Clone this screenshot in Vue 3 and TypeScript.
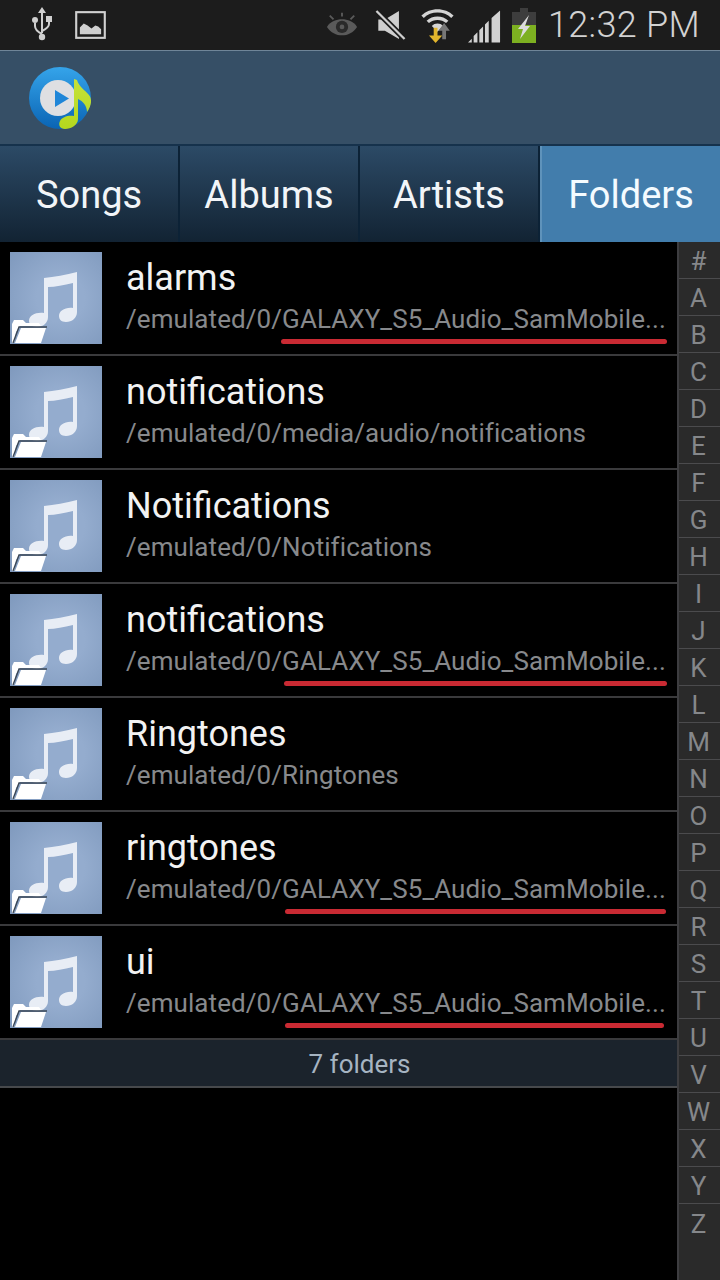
<script setup lang="ts">
const tabs = ['Songs', 'Albums', 'Artists', 'Folders']
const G = 'GALAXY_S5_Audio_SamMobile...'
const rows = [
  { t: 'alarms', p: '/emulated/0/' + G, mark: { left: 281, width: 386 } },
  { t: 'notifications', p: '/emulated/0/media/audio/notifications' },
  { t: 'Notifications', p: '/emulated/0/Notifications' },
  { t: 'notifications', p: '/emulated/0/' + G, mark: { left: 284, width: 383 } },
  { t: 'Ringtones', p: '/emulated/0/Ringtones' },
  { t: 'ringtones', p: '/emulated/0/' + G, mark: { left: 285, width: 381 } },
  { t: 'ui', p: '/emulated/0/' + G, mark: { left: 285, width: 379 } },
]
const letters = '#ABCDEFGHIJKLMNOPQRSTUVWXYZ'.split('')
</script>

<template>
  <div class="screen">
    <div class="status">
      <div class="st-left">
        <svg class="usb" width="24" height="36" viewBox="0 0 24 36">
          <path d="M12 0l4 6h-3v20h-2V6H8z" fill="#cfcfcf" />
          <path d="M12 27c-4-2-7-5-7-8v-3M12 24c4-2 7-4 7-7v-3" fill="none" stroke="#cfcfcf" stroke-width="2" />
          <circle cx="5" cy="13" r="3" fill="#cfcfcf" />
          <rect x="16" y="9" width="6" height="6" fill="#cfcfcf" />
          <circle cx="12" cy="30" r="3.2" fill="#cfcfcf" />
        </svg>
        <svg width="31" height="28" viewBox="0 0 32 29">
          <rect x="1.2" y="1.2" width="29.6" height="26.6" fill="none" stroke="#d0d0d0" stroke-width="2.200" />
          <path d="M5 24v-7l4-4 4 2 4 3 4-3 3 1 3 3v5z" fill="#d0d0d0" />
        </svg>
      </div>
      <div class="st-right">
        <svg class="eye" width="32" height="26" viewBox="0 0 34 26">
          <path d="M1 15c4-6 10-8 16-8s12 2 16 8c-4 6-10 9-16 9S5 21 1 15z" fill="#5a5a5a" />
          <circle cx="17" cy="15" r="6.5" fill="#2a2a2a" />
          <circle cx="17" cy="15" r="2.5" fill="#5a5a5a" />
          <path d="M17 0v4M4 3l4 4M30 3l-4 4" stroke="#5a5a5a" stroke-width="2" />
        </svg>
        <svg class="mute" width="31" height="30" viewBox="0 0 32 32">
          <path d="M3 10h7L25 1v30L10 22H3z" fill="#cfcfcf" />
          <path d="M1 1l30 30" stroke="#1c1c1c" stroke-width="6" />
          <path d="M1 1l30 30" stroke="#cfcfcf" stroke-width="2.400" />
        </svg>
        <svg class="wifi" width="35" height="36" viewBox="0 0 36 38">
          <path d="M1 9C10 0 26 0 35 9l-2.500 2.500C25 4 11 4 3.500 11.500zM6.500 14.500c6-6 17-6 23 0L27 17c-5-4.500-13-4.500-18 0zM12 20c3-3.500 9-3.500 12 0l-6 6z" fill="#d4d4d4" />
          <path d="M14 22h4v8h5l-7 8-7-8h5z" fill="#e2b52c" />
          <path d="M25 17l6 8h-4v9h-4v-9h-4z" fill="#777" />
        </svg>
        <svg class="sig" width="33" height="33" viewBox="0 0 35 34">
          <path d="M0 34l4-4v4zM6 34v-7l4-4v11zM12 34V21l4-4v17zM18 34V15l4-4v23zM25 34V8l9-8v34z" fill="#d2d2d2" />
        </svg>
        <svg class="bat" width="24" height="35" viewBox="0 0 24 35">
          <rect x="8" y="0" width="8" height="4" fill="#3d3d3d" />
          <rect x="0" y="4" width="24" height="31" fill="#3d3d3d" />
          <rect x="0" y="17" width="24" height="18" fill="#7db021" />
          <path d="M17 7L6 21h5l-3 10 10-13h-5z" fill="#dcdcdc" />
        </svg>
        <span class="clock">12:32 PM</span>
      </div>
    </div>

    <header class="bar">
      <svg width="64" height="64" viewBox="0 0 64 64">
        <defs>
          <linearGradient id="ring" x1="0" y1="0" x2="0" y2="1">
            <stop offset="0" stop-color="#35a4ea" />
            <stop offset="1" stop-color="#0a64b4" />
          </linearGradient>
          <linearGradient id="noteFill" x1="0" y1="0" x2="0" y2="1">
            <stop offset="0" stop-color="#c6e23a" />
            <stop offset="1" stop-color="#b4d81e" />
          </linearGradient>
        </defs>
        <circle cx="31" cy="31" r="31" fill="url(#ring)" />
        <circle cx="29" cy="31" r="18" fill="#dedfe2" />
        <path d="M26 23l14 8.500-14 8.500z" fill="#1f86d8" />
        <path d="M45 12l3 1c2 7 8 10 12 15 3 4 3 10-2 17 0-6-4-11-9-13v20c0 6-7 10-13 10-5 0-7-4-5-8 2-4 8-6 14-5z" fill="url(#noteFill)" />
      </svg>
    </header>

    <nav class="tabs">
      <div v-for="(tab, i) in tabs" :key="tab" class="tab" :class="{ active: i === 3 }">{{ tab }}</div>
    </nav>

    <div class="content">
      <ul class="list">
        <li v-for="(r, i) in rows" :key="i" class="row">
          <div class="thumb">
            <svg class="note" width="92" height="92" viewBox="0 0 92 92">
              <path d="M34 26c10-1 22-3 33-6v40c0 6-5 10-11 10-5 0-7-3-7-6 0-5 6-9 14-8V31c-9 2-18 4-25 4v30c0 6-5 10-11 10-5 0-8-3-8-6 0-6 7-9 15-8z" fill="#e8edf5" />
            </svg>
            <svg class="folder" width="36" height="26" viewBox="0 0 36 26">
              <path d="M0 25V6l2-4h9l3 3h13l2 3H8L4 14 2 25z" fill="#fff" />
              <path d="M3 25l6-15h25l-5 15z" fill="#fff" />
              <path d="M1 25l6-16h28" fill="none" stroke="#3b4756" stroke-width="1.400" />
            </svg>
          </div>
          <div class="info">
            <div class="title">{{ r.t }}</div>
            <div class="path">{{ r.p }}</div>
          </div>
          <span
            v-if="r.mark"
            class="mark"
            :style="{ left: r.mark.left + 'px', width: r.mark.width + 'px' }"
          ></span>
        </li>
        <li class="foot">7 folders</li>
      </ul>
      <aside class="index">
        <div v-for="l in letters" :key="l" class="letter">{{ l }}</div>
      </aside>
    </div>
  </div>
</template>

<style scoped>
.screen {
  width: 720px;
  height: 1280px;
  display: flex;
  flex-direction: column;
  background: #000;
  font-family: Roboto, "Liberation Sans", sans-serif;
  overflow: hidden;
}
.status {
  height: 50px;
  flex: none;
  background: #1c1c1c;
  display: flex;
  align-items: center;
  justify-content: space-between;
  padding: 0 20px 0 30px;
  box-sizing: border-box;
}
.st-left {
  display: flex;
  align-items: center;
  gap: 21px;
}
.st-right {
  display: flex;
  align-items: center;
}
.eye { margin-right: 17px; }
.mute { margin-right: 14px; }
.wifi { margin-right: 13px; }
.sig { margin-right: 11px; margin-top: 3px; }
.bat { margin-right: 12px; margin-top: 1px; }
.clock {
  color: #d2d2d2;
  font-size: 36px;
  line-height: 50px;
  font-weight: 300;
  letter-spacing: 0.3px;
  margin-top: -1px;
}
.bar {
  height: 96px;
  flex: none;
  box-sizing: border-box;
  background: #364f66;
  border-top: 1px solid #6f8598;
  border-bottom: 2px solid #16324c;
  padding: 16px 0 0 29px;
  display: flex;
  align-items: flex-start;
}
.tabs {
  height: 96px;
  flex: none;
  display: grid;
  grid-template-columns: repeat(4, 1fr);
}
.tab {
  display: flex;
  align-items: center;
  justify-content: center;
  color: #f2f5f8;
  font-size: 38px;
  padding-top: 1px;
  background: linear-gradient(#2c4a66, #122333);
  border-right: 2px solid #0c2236;
  box-sizing: border-box;
}
.tab.active {
  background: #427dac;
  border-right: 0;
  border-left: 2px solid #5f93bb;
  color: #f4fbff;
}
.content {
  flex: 1;
  display: flex;
  min-height: 0;
}
.list {
  flex: 1;
  min-width: 0;
  list-style: none;
  margin: 0;
  padding: 0;
}
.row {
  position: relative;
  height: 114px;
  box-sizing: border-box;
  display: flex;
  align-items: flex-start;
  padding: 10px 0 0 10px;
  border-bottom: 2px solid #3a3a3c;
}
.thumb {
  position: relative;
  width: 92px;
  height: 92px;
  flex: none;
  background: radial-gradient(circle at 55% 50%, #94acce 35%, #7f99bd 100%);
}
.note {
  position: absolute;
  left: 0;
  top: 0;
}
.folder {
  position: absolute;
  left: 2px;
  bottom: 0;
}
.info {
  margin-left: 24px;
  min-width: 0;
  flex: 1;
}
.title {
  color: #f2f2f2;
  font-size: 36px;
  line-height: 40px;
  margin-top: 6px;
}
.path {
  color: #87898c;
  font-size: 26px;
  letter-spacing: 0.08px;
  line-height: 34px;
  margin-top: 4px;
  white-space: nowrap;
}
.mark {
  position: absolute;
  top: 97px;
  height: 5px;
  background: #c92a33;
  border-radius: 3px;
}
.foot {
  height: 48px;
  box-sizing: border-box;
  display: flex;
  align-items: center;
  justify-content: center;
  padding: 2px 0 0 42px;
  background: #1b232c;
  color: #a6b4c2;
  font-size: 26px;
  border-bottom: 2px solid #47494c;
}
.index {
  width: 43px;
  flex: none;
  box-sizing: border-box;
  background: #2a2a2a;
  border-left: 2px solid #3d3d40;
  display: flex;
  flex-direction: column;
}
.letter {
  height: 37px;
  flex: none;
  box-sizing: border-box;
  display: flex;
  align-items: center;
  justify-content: center;
  padding: 2px 2px 0 0;
  color: #85878a;
  font-size: 26px;
  line-height: 30px;
  border-bottom: 1px solid #4b4b4d;
}
.letter:last-child { border-bottom: 0; }
</style>
